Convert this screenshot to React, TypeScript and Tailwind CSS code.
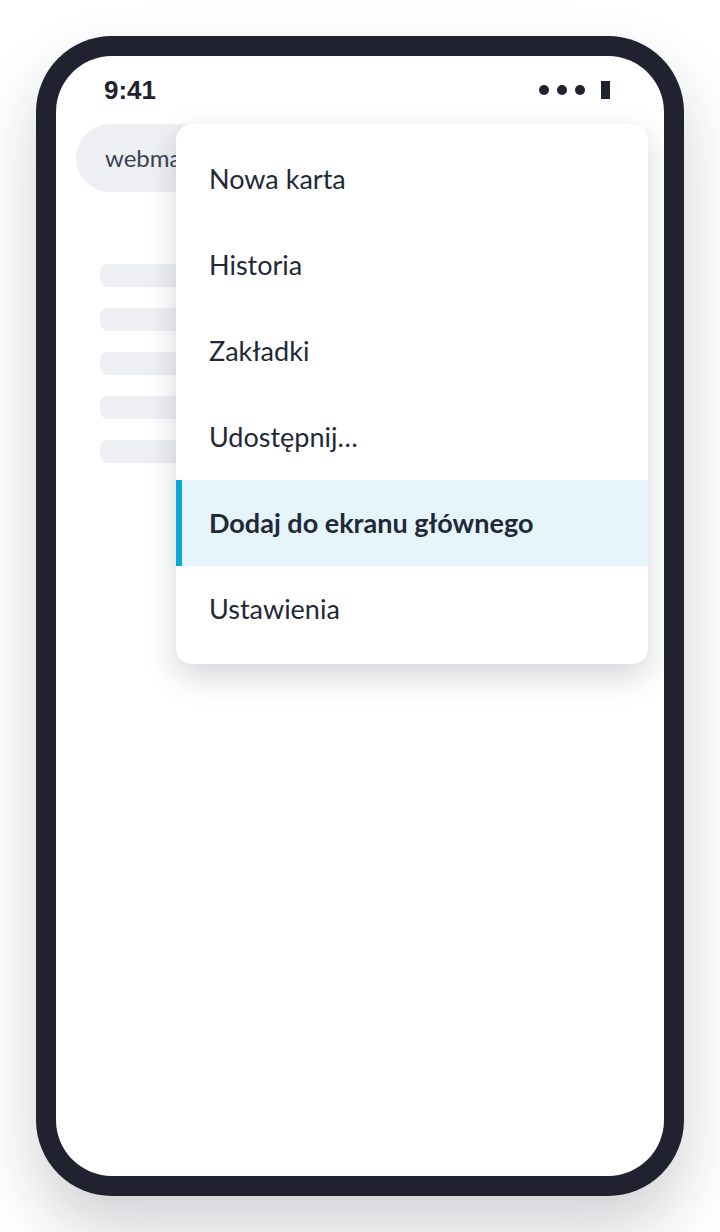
const items = ["Nowa karta", "Historia", "Zakładki", "Udostępnij…", "Dodaj do ekranu głównego", "Ustawienia"];
const active = 4;

export default function App() {
  return (
    <div className="min-h-[1232px] w-[720px] bg-white p-9" style={{ fontFamily: "Lato, 'Noto Sans', sans-serif" }}>
      <div className="h-[1160px] w-[648px] rounded-[76px] bg-[#20232f] p-5 shadow-[0_32px_64px_rgba(17,24,39,0.2)]">
        <div className="relative h-full w-full overflow-hidden rounded-[56px] bg-white">
          {/* status bar */}
          <div className="flex h-[68px] items-center justify-between pl-12 pr-[54px]">
            <span className="text-[26px] font-bold text-[#1f2330]" style={{ fontFamily: "'Liberation Sans', Arial, sans-serif" }}>
              9:41
            </span>
            <div className="flex items-center gap-2">
              <span className="h-2.5 w-2.5 rounded-full bg-[#1f2330]" />
              <span className="h-2.5 w-2.5 rounded-full bg-[#1f2330]" />
              <span className="h-2.5 w-2.5 rounded-full bg-[#1f2330]" />
              <span className="ml-2 h-[18px] w-[9px] bg-[#1f2330]" />
            </div>
          </div>

          {/* address bar, only the part left of the menu shows */}
          <div className="mx-5 flex h-[68px] items-center rounded-full bg-[#eef0f4] pl-[29px] text-[24px] text-[#3b4252]">
            <span className="whitespace-nowrap">webma</span>
          </div>

          {/* page skeleton */}
          <div className="mt-[72px] flex flex-col gap-[21px] px-11">
            {[0, 1, 2, 3, 4].map((i) => (
              <div key={i} className="h-[23px] rounded-lg bg-[#eef0f4]" />
            ))}
          </div>

          {/* menu */}
          <div className="absolute left-[120px] right-4 top-[68px] rounded-2xl bg-white py-3 shadow-[0_12px_32px_rgba(17,24,39,0.18)]">
            {items.map((label, i) => (
              <div
                key={label}
                className={
                  i === active
                    ? "flex h-[86px] items-center border-l-[6px] border-[#0ea5d9] bg-[#e6f4fc] pl-[27px] text-[27px] font-bold text-[#1f2937]"
                    : "flex h-[86px] items-center border-l-[6px] border-transparent pl-[27px] text-[27px] text-[#1f2937]"
                }
              >
                {label}
              </div>
            ))}
          </div>
        </div>
      </div>
    </div>
  );
}
